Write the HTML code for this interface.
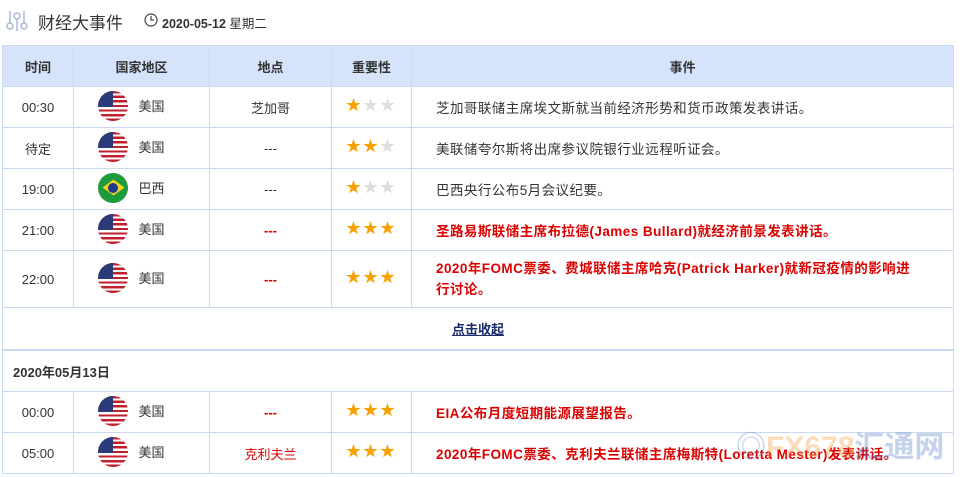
<!DOCTYPE html><html><head><meta charset="utf-8"><style>
body{margin:0;width:960px;height:477px;overflow:hidden;background:#fff;font-family:"Liberation Sans","Noto Sans CJK SC",sans-serif;font-size:13px;color:#333}
.top{position:absolute;left:0;top:0;width:960px;height:44px}
table{position:absolute;left:2px;top:45px;width:952px;border-collapse:collapse;table-layout:fixed}
td,th{border:1px solid #c9d9f3;text-align:center;padding:0}
th{background:#d5e3fb;height:40px;font-weight:bold;color:#333}
td{height:40px}
.l{text-align:left;padding-left:24px;padding-right:30px;font-size:13.5px;letter-spacing:.45px}
.red{color:#d00;font-weight:bold}
.flag{display:inline-block;width:30px;height:30px;border-radius:50%;vertical-align:middle;margin-right:10px;overflow:hidden;position:relative;
background:repeating-linear-gradient(#c0202c 0 2.3px,#fff 2.3px 4.6px)}
.flag:before{content:"";position:absolute;left:0;top:0;width:15px;height:16px;background:#2b3b7a}
.br{background:#1d9b3c}
.br:before{display:none}
.br:after{content:"";position:absolute;left:4px;top:7px;width:22px;height:16px;background:#f6d21b;clip-path:polygon(50% 0,100% 50%,50% 100%,0 50%)}
.br i{position:absolute;left:10px;top:10px;width:10px;height:10px;border-radius:50%;background:#1f3a8f;z-index:2}
.c{display:inline-flex;align-items:center;margin-left:-20px}
.s{color:#f7a100;font-size:15px;letter-spacing:2px;position:relative;top:-3px}.g{color:#ddd}
</style></head><body>
<div class="top">
<svg style="position:absolute;left:6px;top:10px" width="22" height="22" viewBox="0 0 22 22" fill="none" stroke="#aab8d8" stroke-width="1.5"><line x1="4" y1="1" x2="4" y2="13"/><circle cx="4" cy="16" r="3"/><line x1="11" y1="9" x2="11" y2="21"/><circle cx="11" cy="6" r="3"/><line x1="18" y1="1" x2="18" y2="13"/><circle cx="18" cy="16" r="3"/></svg>
<span style="position:absolute;left:38px;top:9px;font-size:17px;color:#333">财经大事件</span>
<svg style="position:absolute;left:144px;top:13px" width="14" height="14" viewBox="0 0 14 14" fill="none" stroke="#444" stroke-width="1.2"><circle cx="7" cy="7" r="6"/><path d="M7 3v4h3"/></svg>
<span style="position:absolute;left:162px;top:13px;font-size:12.5px;font-weight:bold;color:#333">2020-05-12 <span style="font-weight:normal">星期二</span></span>
</div>
<table>
<colgroup><col style="width:71px"><col style="width:136px"><col style="width:122px"><col style="width:80px"><col></colgroup>
<tr><th>时间</th><th>国家地区</th><th>地点</th><th>重要性</th><th>事件</th></tr>
<tr><td>00:30</td><td><span class="c"><span class="flag"></span>美国</span></td><td>芝加哥</td><td><span class="s">★<span class="g">★★</span></span></td><td class="l">芝加哥联储主席埃文斯就当前经济形势和货币政策发表讲话。</td></tr>
<tr><td>待定</td><td><span class="c"><span class="flag"></span>美国</span></td><td>---</td><td><span class="s">★★<span class="g">★</span></span></td><td class="l">美联储夸尔斯将出席参议院银行业远程听证会。</td></tr>
<tr><td>19:00</td><td><span class="c"><span class="flag br"><i></i></span>巴西</span></td><td>---</td><td><span class="s">★<span class="g">★★</span></span></td><td class="l">巴西央行公布5月会议纪要。</td></tr>
<tr><td>21:00</td><td><span class="c"><span class="flag"></span>美国</span></td><td class="red">---</td><td><span class="s">★★★</span></td><td class="l red">圣路易斯联储主席布拉德(James Bullard)就经济前景发表讲话。</td></tr>
<tr><td style="height:56px">22:00</td><td><span class="c"><span class="flag"></span>美国</span></td><td class="red">---</td><td><span class="s">★★★</span></td><td class="l red" style="line-height:21px">2020年FOMC票委、费城联储主席哈克(Patrick Harker)就新冠疫情的影响进行讨论。</td></tr>
<tr><td colspan="5" style="height:41px;border-bottom:2px solid #c9d9f3"><a style="color:#1a2a6a;font-weight:bold;text-decoration:underline">点击收起</a></td></tr>
<tr><td colspan="5" style="text-align:left;padding-left:10px;font-weight:bold">2020年05月13日</td></tr>
<tr><td>00:00</td><td><span class="c"><span class="flag"></span>美国</span></td><td class="red">---</td><td><span class="s">★★★</span></td><td class="l red">EIA公布月度短期能源展望报告。</td></tr>
<tr><td>05:00</td><td><span class="c"><span class="flag"></span>美国</span></td><td style="color:#d00">克利夫兰</td><td><span class="s">★★★</span></td><td class="l red">2020年FOMC票委、克利夫兰联储主席梅斯特(Loretta Mester)发表讲话。</td></tr>
</table>
<div style="position:absolute;left:736px;top:422px;font-size:30px;font-weight:bold;opacity:.35;white-space:nowrap"><span style="color:#5a7fc8">◎</span><span style="color:#f7a040">FX678</span><span style="color:#5a7fc8">汇通网</span></div>
</body></html>
